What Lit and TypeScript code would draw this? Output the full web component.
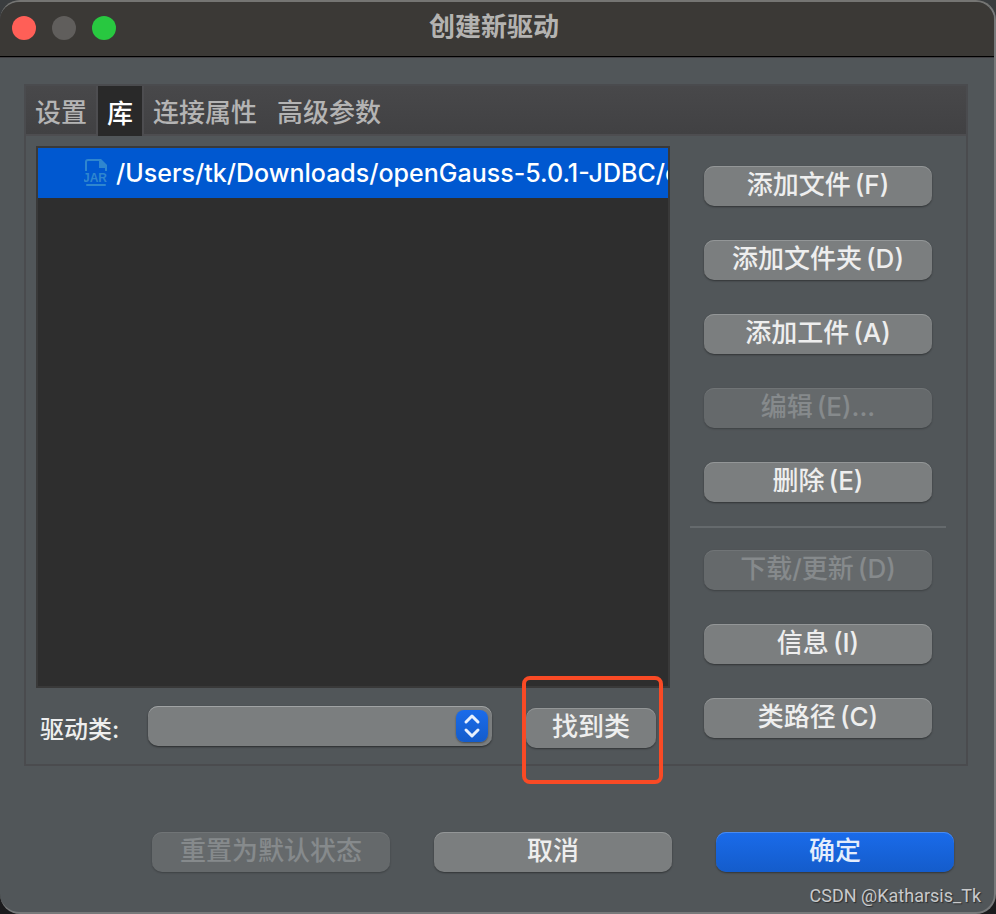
import { LitElement, html, css, nothing } from "lit";
import { customElement, property, state } from "lit/decorators.js";
import { classMap } from "lit/directives/class-map.js";

interface Action {
  label: string;
  key: string;
  disabled?: boolean;
  divided?: boolean;
}

const TABS = ["设置", "库", "连接属性", "高级参数"];

const ACTIONS: Action[] = [
  { label: "添加文件", key: "(F)" },
  { label: "添加文件夹", key: "(D)" },
  { label: "添加工件", key: "(A)" },
  { label: "编辑", key: "(E)...", disabled: true },
  { label: "删除", key: "(E)" },
  { label: "下载/更新", key: "(D)", disabled: true, divided: true },
  { label: "信息", key: "(I)" },
  { label: "类路径", key: "(C)" },
];

@customElement("push-button")
class PushButton extends LitElement {
  @property() label = "";
  @property() shortcut = "";
  @property({ type: Boolean }) disabled = false;
  @property({ type: Boolean }) primary = false;

  static styles = css`
    :host {
      display: block;
    }
    .button {
      display: flex;
      align-items: center;
      justify-content: center;
      gap: 4px;
      width: 100%;
      height: 40px;
      box-sizing: border-box;
      margin: 0;
      padding: 0 0 2px;
      border: 0;
      border-radius: 10px;
      background: #7b7e7f;
      box-shadow: inset 0 1px 0 #939697, 0 1px 2px rgba(0, 0, 0, 0.4);
      color: #eeeeee;
      font: 500 26px/36px Inter, "Noto Sans CJK SC", sans-serif;
      white-space: nowrap;
    }
    .button:disabled {
      background: #65696b;
      box-shadow: inset 0 1px 0 #707476, 0 1px 2px rgba(0, 0, 0, 0.25);
      color: #868a8c;
    }
    .primary {
      background: linear-gradient(#1a6bea, #145ccb);
      box-shadow: inset 0 1px 0 #4a8bf0, 0 1px 2px rgba(0, 0, 0, 0.4);
      color: #e4edfc;
    }
  `;

  render() {
    return html`<button
      type="button"
      class=${classMap({ button: true, primary: this.primary })}
      ?disabled=${this.disabled}
    >
      <span>${this.label}</span>${this.shortcut ? html`<span>${this.shortcut}</span>` : nothing}
    </button>`;
  }
}

@customElement("app-root")
class AppRoot extends LitElement {
  @state() private tab = 1;

  static styles = css`
    :host {
      display: block;
      min-height: 100vh;
      background: linear-gradient(#3a3d3f 50%, #1b1b1d 50%);
      font-family: Inter, "Noto Sans CJK SC", sans-serif;
      color: #eeeeee;
    }
    .window {
      position: relative;
      display: flex;
      flex-direction: column;
      box-sizing: border-box;
      min-height: 100vh;
      border: 2px solid #77797a;
      border-left: 0;
      border-top-color: #757573;
      border-radius: 20px;
      background: #515659;
      overflow: hidden;
    }
    .titlebar {
      display: grid;
      grid-template-columns: 1fr auto 1fr;
      align-items: center;
      height: 52px;
      padding: 0 18px 2px 12px;
      background: #3b3936;
      border-bottom: 1px solid #000000;
      box-shadow: 0 1px 0 #403f43;
    }
    .lights {
      display: flex;
      gap: 16px;
    }
    .light {
      width: 24px;
      height: 24px;
      padding: 0;
      border: 0;
      border-radius: 50%;
    }
    .close {
      background: #ff5f57;
    }
    .minimize {
      background: #605e5c;
    }
    .zoom {
      background: #28c840;
    }
    .title {
      margin: 0;
      padding-bottom: 2px;
      font-size: 26px;
      line-height: 36px;
      font-weight: 700;
      color: #b4b3b1;
    }
    .panel {
      margin: 27px 26px 0 24px;
      border: 2px solid #4a4b4e;
    }
    .tabs {
      display: flex;
      gap: 2px;
      height: 48px;
      border-bottom: 2px solid #4d4d50;
      background: linear-gradient(#48484a, #414143);
    }
    .tab {
      padding: 6px 9px 0;
      border: 0;
      background: none;
      color: #b4b4b4;
      font: 500 26px/36px Inter, "Noto Sans CJK SC", sans-serif;
    }
    .tab.selected {
      margin: 0 -2px -2px;
      border: 0 solid #4d4d50;
      border-width: 0 2px;
      background: #292929;
      color: #ffffff;
    }
    .body {
      display: flex;
      gap: 20px;
      padding: 10px 20px 0 10px;
    }
    .main {
      flex: 1;
      min-width: 0;
      display: flex;
      flex-direction: column;
    }
    .files {
      flex: 1;
      margin: 0;
      padding: 0;
      list-style: none;
      overflow: hidden;
      border: 2px solid #393939;
      background: #2e2e2e;
    }
    .file {
      display: flex;
      align-items: center;
      gap: 8px;
      height: 50px;
      padding-left: 46px;
      background: #0058d0;
      color: #ffffff;
      font-size: 25px;
      font-weight: 500;
      white-space: nowrap;
    }
    .jar {
      flex: none;
      width: 24px;
      height: 28px;
    }
    .jar text {
      font: 700 12px "Liberation Sans", sans-serif;
    }
    .driver {
      display: flex;
      align-items: center;
      height: 40px;
      padding: 18px 14px 18px 4px;
    }
    .label {
      width: 108px;
      padding-top: 8px;
      font-size: 24px;
      line-height: 36px;
      font-weight: 500;
    }
    .combo {
      position: relative;
      flex: 1;
      height: 40px;
      margin-right: 34px;
    }
    .select {
      appearance: none;
      display: block;
      width: 100%;
      height: 40px;
      padding: 0 44px 0 12px;
      border: 0;
      border-radius: 10px;
      background: #7b7e7f;
      box-shadow: inset 0 1px 0 #a0a3a4, 0 1px 2px rgba(0, 0, 0, 0.5);
      color: #eeeeee;
      font: 26px Inter, "Noto Sans CJK SC", sans-serif;
    }
    .arrows {
      position: absolute;
      top: 4px;
      right: 4px;
      width: 32px;
      height: 32px;
      border-radius: 8px;
      background: linear-gradient(#1a6bea, #145ccb);
      box-shadow: 0 1px 2px rgba(0, 0, 0, 0.4);
      pointer-events: none;
    }
    .find {
      position: relative;
      width: 130px;
      padding-top: 4px;
    }
    .mark {
      position: absolute;
      inset: -28px -7px -36px -4px;
      border: 4px solid #f94a25;
      border-radius: 8px;
      pointer-events: none;
    }
    .side {
      flex: none;
      width: 256px;
      box-sizing: border-box;
      display: flex;
      flex-direction: column;
      gap: 34px;
      padding: 20px 0 26px;
    }
    .action {
      margin: 0 14px;
    }
    .divider {
      width: 100%;
      height: 2px;
      margin: -10px 0 -12px;
      border: 0;
      background: #656a6d;
    }
    .footer {
      display: flex;
      justify-content: flex-end;
      gap: 44px;
      padding: 66px 40px 40px;
    }
    .choice {
      width: 238px;
    }
    .watermark {
      position: absolute;
      right: 13px;
      bottom: 4px;
      color: #c9cacb;
      font: 18px/24px Roboto, sans-serif;
      text-shadow: 1px 1px 1px #2c2e30;
    }
  `;

  render() {
    return html`
      <main class="window">
        <header class="titlebar">
          <div class="lights">
            <button class="light close" aria-label="关闭"></button>
            <button class="light minimize" aria-label="最小化" disabled></button>
            <button class="light zoom" aria-label="缩放"></button>
          </div>
          <h1 class="title">创建新驱动</h1>
        </header>
        <section class="panel">
          <div class="tabs" role="tablist">
            ${TABS.map(
              (name, i) => html`<button
                role="tab"
                class=${classMap({ tab: true, selected: i === this.tab })}
                aria-selected=${i === this.tab}
                @click=${() => (this.tab = i)}
              >${name}</button>`
            )}
          </div>
          <div class="body">
            <div class="main">
              <ul class="files">
                <li class="file">
                  <svg class="jar" viewBox="0 0 24 28" aria-hidden="true">
                    <g fill="none" stroke="#2f86cf" stroke-width="2">
                      <path d="M2 12V3Q2 1 4 1H16L22 7V12" />
                      <path d="M3 26H21" stroke-linecap="round" />
                    </g>
                    <path d="M15 0H17L23 6V9H15Z" fill="#2f86cf" />
                    <text x="-1" y="23" fill="#2f86cf">JAR</text>
                  </svg>
                  <span>/Users/tk/Downloads/openGauss-5.0.1-JDBC/o</span>
                </li>
              </ul>
              <div class="driver">
                <label class="label" for="driver-class">驱动类:</label>
                <div class="combo">
                  <select class="select" id="driver-class">
                    <option></option>
                  </select>
                  <svg class="arrows" viewBox="0 0 32 32" aria-hidden="true">
                    <path
                      d="M10 12L16 6L22 12M10 20L16 26L22 20"
                      fill="none"
                      stroke="#e8f0fd"
                      stroke-width="3"
                      stroke-linecap="round"
                      stroke-linejoin="round"
                    />
                  </svg>
                </div>
                <div class="find">
                  <push-button label="找到类"></push-button>
                  <div class="mark"></div>
                </div>
              </div>
            </div>
            <div class="side">
              ${ACTIONS.map(
                (a) => html`${a.divided ? html`<hr class="divider" />` : nothing}
                  <push-button
                    class="action"
                    label=${a.label}
                    shortcut=${a.key}
                    ?disabled=${a.disabled}
                  ></push-button>`
              )}
            </div>
          </div>
        </section>
        <footer class="footer">
          <push-button class="choice" label="重置为默认状态" disabled></push-button>
          <push-button class="choice" label="取消"></push-button>
          <push-button class="choice" label="确定" primary></push-button>
        </footer>
        <div class="watermark">CSDN @Katharsis_Tk</div>
      </main>
    `;
  }
}
